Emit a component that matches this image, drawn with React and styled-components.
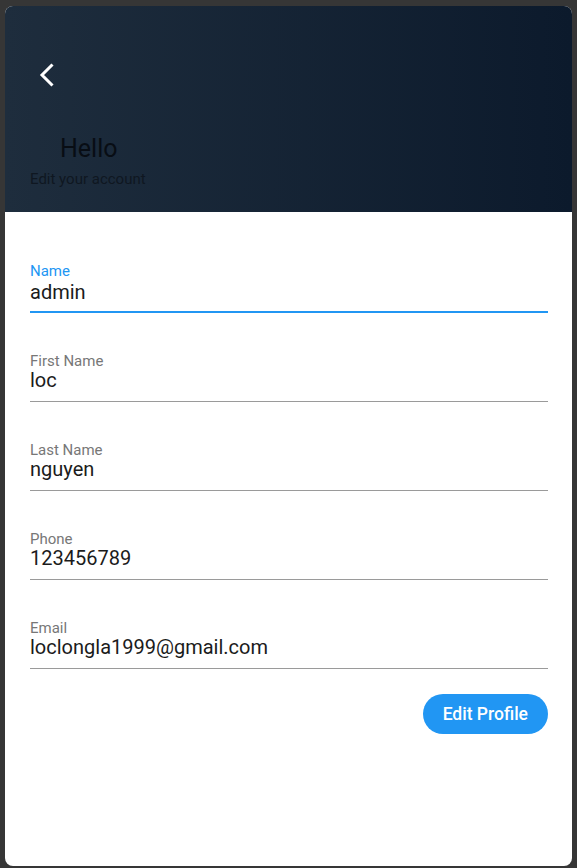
import React from 'react';
import styled, { createGlobalStyle } from 'styled-components';

const GlobalStyle = createGlobalStyle`
    html, body {
        margin: 0;
        padding: 0;
        background: #363636;
        font-family: Roboto, 'Noto Sans', sans-serif;
    }
`;

const Screen = styled.div`
    width: 567px;
    height: 860px;
    margin: 6px 0 0 5px;
    border-radius: 8px;
    overflow: hidden;
    background: #fff;
    display: flex;
    flex-direction: column;
`;

const Header = styled.header`
    height: 206px;
    box-sizing: border-box;
    padding: 57px 25px 0;
    background: linear-gradient(to right, #1e2d3d, #0c1a2c);
    display: flex;
    flex-direction: column;
    align-items: flex-start;
`;

const BackButton = styled.button`
    border: 0;
    padding: 0;
    margin-left: 9px;
    background: none;
    height: 24px;
    display: flex;
    cursor: pointer;
`;

const Title = styled.h1`
    margin: 47px 0 0 30px;
    font-size: 25px;
    line-height: 29px;
    font-weight: 400;
    color: #080d14;
`;

const Subtitle = styled.p`
    margin: 8px 0 0;
    font-size: 15px;
    line-height: 16px;
    color: #0f1721;
`;

const Body = styled.main`
    padding: 52px 24px 0 25px;
    display: flex;
    flex-direction: column;
`;

const Field = styled.label`
    display: flex;
    flex-direction: column;
    padding-bottom: ${(p) => (p.$focused ? '7px' : '9px')};
    margin-bottom: 41px;
    border-bottom: ${(p) => (p.$focused ? '2px solid #2196f3' : '1px solid #9a9a9a')};
`;

const Label = styled.span`
    font-size: 15px;
    line-height: 15px;
    color: ${(p) => (p.$focused ? '#2196f3' : '#777')};
`;

const Input = styled.input`
    border: 0;
    outline: none;
    padding: 0;
    margin: ${(p) => (p.$focused ? '1px' : '-1px')} 0 0;
    background: transparent;
    font-family: inherit;
    font-size: 20px;
    line-height: 24px;
    height: 24px;
    color: #1b1b1b;
`;

const Actions = styled.div`
    display: flex;
    justify-content: flex-end;
    margin-top: -16px;
`;

const EditButton = styled.button`
    height: 40px;
    padding: 0 20px;
    border: 0;
    border-radius: 20px;
    background: #2196f3;
    color: #fff;
    font-family: inherit;
    font-size: 17.5px;
    font-weight: 500;
    cursor: pointer;
`;

const fields = [
    { label: 'Name', value: 'admin', focused: true },
    { label: 'First Name', value: 'loc' },
    { label: 'Last Name', value: 'nguyen' },
    { label: 'Phone', value: '123456789' },
    { label: 'Email', value: 'loclongla1999@gmail.com' },
];

const App = () => {
    return (
        <>
            <GlobalStyle />
            <Screen>
                <Header>
                    <BackButton aria-label='Back'>
                        <svg width='16' height='24' viewBox='0 0 16 24'>
                            <path
                                d='M13.5 1.5 3 12l10.5 10.5'
                                fill='none'
                                stroke='#fff'
                                strokeWidth='3'
                            />
                        </svg>
                    </BackButton>
                    <Title>Hello</Title>
                    <Subtitle>Edit your account</Subtitle>
                </Header>
                <Body>
                    {fields.map((f) => (
                        <Field key={f.label} $focused={f.focused}>
                            <Label $focused={f.focused}>{f.label}</Label>
                            <Input $focused={f.focused} defaultValue={f.value} />
                        </Field>
                    ))}
                    <Actions>
                        <EditButton>Edit Profile</EditButton>
                    </Actions>
                </Body>
            </Screen>
        </>
    );
};

export default App;
